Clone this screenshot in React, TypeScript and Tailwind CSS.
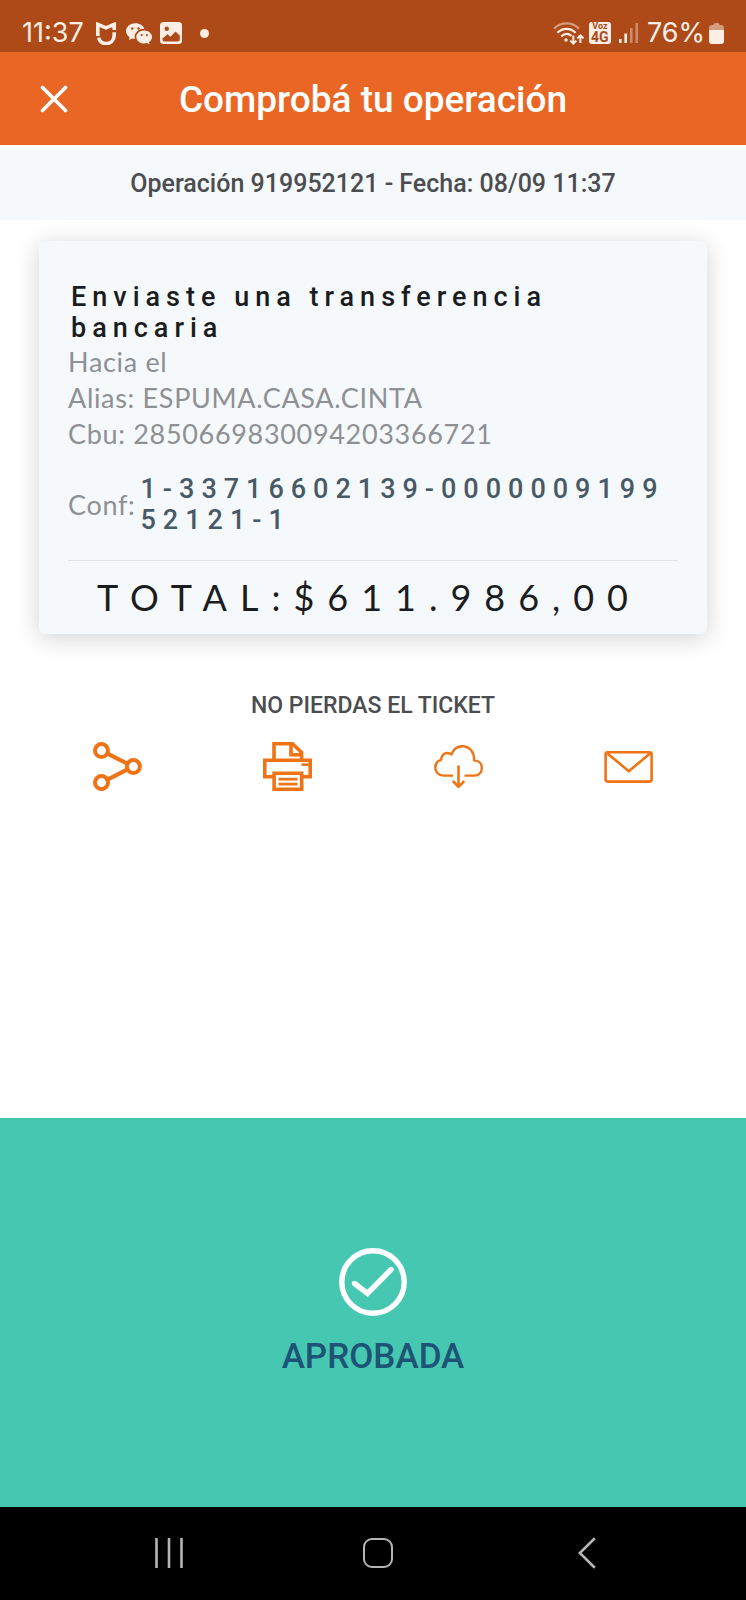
import React from 'react';
import { BsWechat } from 'react-icons/bs';

const ShareIcon = () => (
  <svg viewBox="0 0 49 49" className="w-[49px] h-[49px]" fill="none" stroke="currentColor" strokeWidth="4" aria-hidden="true">
    <circle cx="8.5" cy="8.6" r="6.5" />
    <circle cx="40.4" cy="24.6" r="6.5" />
    <circle cx="8.5" cy="40.6" r="6.5" />
    <path d="M14.5 11.6 34.5 21.8M14.5 37.6 34.5 27.4" />
  </svg>
);

const PrintIcon = () => (
  <svg viewBox="0 0 49 49" className="w-[49px] h-[49px]" fill="none" stroke="currentColor" strokeWidth="3.6" aria-hidden="true">
    <path d="M11 18V1.8H29.5L38.6 10.5V18" />
    <path d="M28 2V12.8H39" />
    <path d="M10 34.8H1.8V18.2H47.2V34.8H39" />
    <path d="M11.1 31.2H38.7V47.2H11.1Z" />
    <path d="M15.5 37.1H34.5M15.5 42.1H34.5" strokeWidth="2.6" />
    <path d="M38.5 22.6H45.5" strokeWidth="2.6" />
  </svg>
);

const DownloadIcon = () => (
  <svg viewBox="0 0 49 49" className="w-[49px] h-[49px]" fill="none" stroke="currentColor" strokeWidth="2.4" strokeLinejoin="round" aria-hidden="true">
    <path d="M19 33.6H9.5C4.5 33.6 1.3 30 1.3 25.8C1.3 21.5 3.8 18.6 7.2 17.8C7.4 11.6 12.8 9.2 17.6 12.4C19.4 7.2 23.5 4.2 28.4 4.2C35.6 4.2 40.6 10.4 40 18.4C44.8 18.4 47.8 21.6 47.8 26C47.8 30.4 44.9 33.6 40 33.6H30.5" />
    <path d="M24.5 23.5V44.5M18.8 39 24.5 44.8 30.3 39" strokeWidth="2.6" />
  </svg>
);

const MailIcon = () => (
  <svg viewBox="0 0 49 49" className="w-[49px] h-[49px]" fill="none" stroke="currentColor" strokeWidth="2.6" strokeLinejoin="round" aria-hidden="true">
    <rect x="1.6" y="10.2" width="46" height="29.4" rx="2" />
    <path d="M3.4 11.4 24.8 29.2 46 11.4" />
  </svg>
);

const actions = [
  { label: 'Compartir', icon: <ShareIcon /> },
  { label: 'Imprimir', icon: <PrintIcon /> },
  { label: 'Descargar', icon: <DownloadIcon /> },
  { label: 'Enviar por correo', icon: <MailIcon /> },
];

const StatusBar = () => (
  <div className="flex h-[52px] items-end justify-between bg-[#ad4a18] px-[22px] pb-1 font-[Inter,sans-serif] text-[#fdeee6]">
    <div className="flex h-[30px] items-center">
      <span className="text-[27px] leading-[30px]">11:37</span>
      <svg viewBox="0 0 20 23" className="ml-3 h-[23px] w-5" fill="none" stroke="currentColor" strokeWidth="3.6" aria-hidden="true">
        <path d="M1.8 14V2.4L10 5.8 18.2 2.4V8" />
        <path d="M18.2 10.2V13C18.2 24 3.4 24 2.8 15.6" />
      </svg>
      <BsWechat className="ml-[10px] h-[26px] w-[26px]" aria-hidden="true" />
      <svg viewBox="0 0 22 22" className="ml-2 h-[22px] w-[22px]" aria-hidden="true">
        <rect width="22" height="22" rx="3.5" fill="currentColor" />
        <circle cx="6.8" cy="6.8" r="2.2" fill="#ad4a18" />
        <path d="M2.5 16.5 7.5 12.3 10.5 14.8 15.5 9.5 19.8 13.8V17.5Q19.8 19.5 17.8 19.5H4.5Q2.5 19.5 2.5 17.5Z" fill="#ad4a18" />
      </svg>
      <span className="ml-[18px] h-[9px] w-[9px] rounded-full bg-current" />
    </div>
    <div className="flex h-[30px] items-center">
      <svg viewBox="0 0 31 23" className="h-[23px] w-[31px]" fill="none" stroke="currentColor" strokeWidth="2.2" aria-hidden="true">
        <path d="M1 6.8C7.5-.4 19.5-.4 26 6.8" opacity=".5" />
        <path d="M4.4 10.8C9.5 5.6 17.5 5.6 22.6 10.8" />
        <path d="M8.2 14.4C11.5 11.4 15.5 11.4 18.4 13.8" />
        <circle cx="13" cy="18" r="1.7" fill="currentColor" stroke="none" />
        <path d="M20.3 13.5V21.5M17.2 18.6 20.3 21.6 23.4 18.6M27.4 21V13.5M24.3 16.4 27.4 13.4 30.5 16.4" strokeWidth="2" />
      </svg>
      <span className="ml-[5px] h-[22px] w-[22px] rounded-[3px] bg-current">
        <span className="flex flex-col items-center font-[Roboto,sans-serif] font-bold text-[#ad4a18]">
          <span className="text-[9px] leading-[9px]">Voz</span>
          <span className="text-[14px] leading-[13px]">4G</span>
        </span>
      </span>
      <svg viewBox="0 0 20 20" className="ml-2 h-5 w-5" fill="currentColor" aria-hidden="true">
        <rect x="0" y="16" width="2.6" height="4" />
        <rect x="5.4" y="10.5" width="2.6" height="9.5" />
        <rect x="11" y="5" width="2.6" height="15" opacity=".4" />
        <rect x="16.4" y="0" width="2.6" height="20" opacity=".4" />
      </svg>
      <span className="ml-2 text-[27px] leading-[30px]">76%</span>
      <svg viewBox="0 0 15 21" className="ml-1 h-[21px] w-[15px]" fill="currentColor" aria-hidden="true">
        <path d="M0 7V5Q0 2 3 2H4.5Q4.5 0 6 0H9Q10.5 0 10.5 2H12Q15 2 15 5V7Z" opacity=".5" />
        <path d="M0 7H15V18Q15 21 12 21H3Q0 21 0 18Z" />
      </svg>
    </div>
  </div>
);

const App = () => {
  return (
    <div className="flex min-h-screen flex-col bg-white font-[Roboto,sans-serif]">
      <StatusBar />

      <header className="relative flex h-[93px] items-center justify-center bg-[#e96625] text-white">
        <button type="button" aria-label="Cerrar" className="absolute left-[38px] flex h-8 w-8 items-center justify-center">
          <svg viewBox="0 0 28 28" className="h-7 w-7" fill="none" stroke="currentColor" strokeWidth="3.6" strokeLinecap="round" aria-hidden="true">
            <path d="M2.5 2.5 25.5 25.5M25.5 2.5 2.5 25.5" />
          </svg>
        </button>
        <h1 className="pt-0.5 text-[37px] font-medium leading-[44px]">Comprobá tu operación</h1>
      </header>

      <main className="flex flex-1 flex-col">
        <p className="mt-[5px] bg-[#f5f9fc] pb-[19px] pt-[17px] text-center text-[25px] font-medium leading-[34px] text-[#4b4d50]">
          Operación 919952121 - Fecha: 08/09 11:37
        </p>

        <section className="mx-[39px] mt-[21px] rounded-md bg-[#f5f9fc] px-[29px] pb-4 pt-[41px] shadow-[0_4px_24px_rgba(0,0,0,0.18)]">
          <h2 className="ml-[3px] text-[27px] font-medium leading-[31px] tracking-[6px] text-[#1b1c20]">
            Enviaste una transferencia bancaria
          </h2>
          <div className="font-[Lato,sans-serif] text-[27px] leading-[36px] tracking-wide text-[#8e9094]">
            <p>Hacia el</p>
            <p>Alias: ESPUMA.CASA.CINTA</p>
            <p>Cbu: 2850669830094203366721</p>
          </div>
          <div className="mt-[22px] flex items-center gap-[5px]">
            <span className="font-[Lato,sans-serif] text-[27px] leading-[36px] tracking-wide text-[#8e9094]">Conf:</span>
            <span className="min-w-0 break-all text-[27px] font-medium leading-[31px] tracking-[7px] text-[#485a66]">
              1-33716602139-000000919952121-1
            </span>
          </div>
          <p className="mt-6 border-t border-[#e0e3e6] pr-2 pt-[15px] text-center font-[Lato,sans-serif] text-[36px] leading-[42px] tracking-[13px] text-[#1b1c20]">
            TOTAL:$611.986,00
          </p>
        </section>

        <h3 className="mt-[58px] text-center text-[23px] font-medium leading-[28px] text-[#4b4d50]">NO PIERDAS EL TICKET</h3>
        <div className="mx-8 mt-[22px] grid grid-cols-4 text-[#f07316]">
          {actions.map((action) => (
            <button key={action.label} type="button" aria-label={action.label} className="flex justify-center">
              {action.icon}
            </button>
          ))}
        </div>
      </main>

      <section className="flex h-[389px] flex-col items-center bg-[#46c7b2] pt-[130px]">
        <svg viewBox="0 0 68 68" className="h-[68px] w-[68px]" fill="none" stroke="white" strokeWidth="5.4" aria-hidden="true">
          <circle cx="34" cy="34" r="31.2" />
          <path d="M15.5 35.5 28.5 45.5 52 21.5" strokeLinecap="round" />
        </svg>
        <p className="mt-[21px] text-[35px] font-medium leading-[40px] text-[#1d5475]">APROBADA</p>
      </section>

      <nav className="grid h-[93px] grid-cols-3 bg-black pb-0.5 pl-16 pr-[55px] text-[#b5b5b5]">
        <button type="button" aria-label="Recientes" className="flex items-center justify-center">
          <svg viewBox="0 0 28 30" className="h-[30px] w-7" fill="none" stroke="currentColor" strokeWidth="2.6" aria-hidden="true">
            <path d="M1.5 0V30M14 0V30M26.5 0V30" />
          </svg>
        </button>
        <button type="button" aria-label="Inicio" className="flex items-center justify-center">
          <span className="h-[30px] w-[30px] rounded-[9px] border-2 border-current" />
        </button>
        <button type="button" aria-label="Atrás" className="flex items-center justify-center">
          <svg viewBox="0 0 18 32" className="h-8 w-[18px]" fill="none" stroke="currentColor" strokeWidth="2.6" aria-hidden="true">
            <path d="M16.8 1.2 1.8 16 16.8 30.8" />
          </svg>
        </button>
      </nav>
    </div>
  );
};

export default App;
